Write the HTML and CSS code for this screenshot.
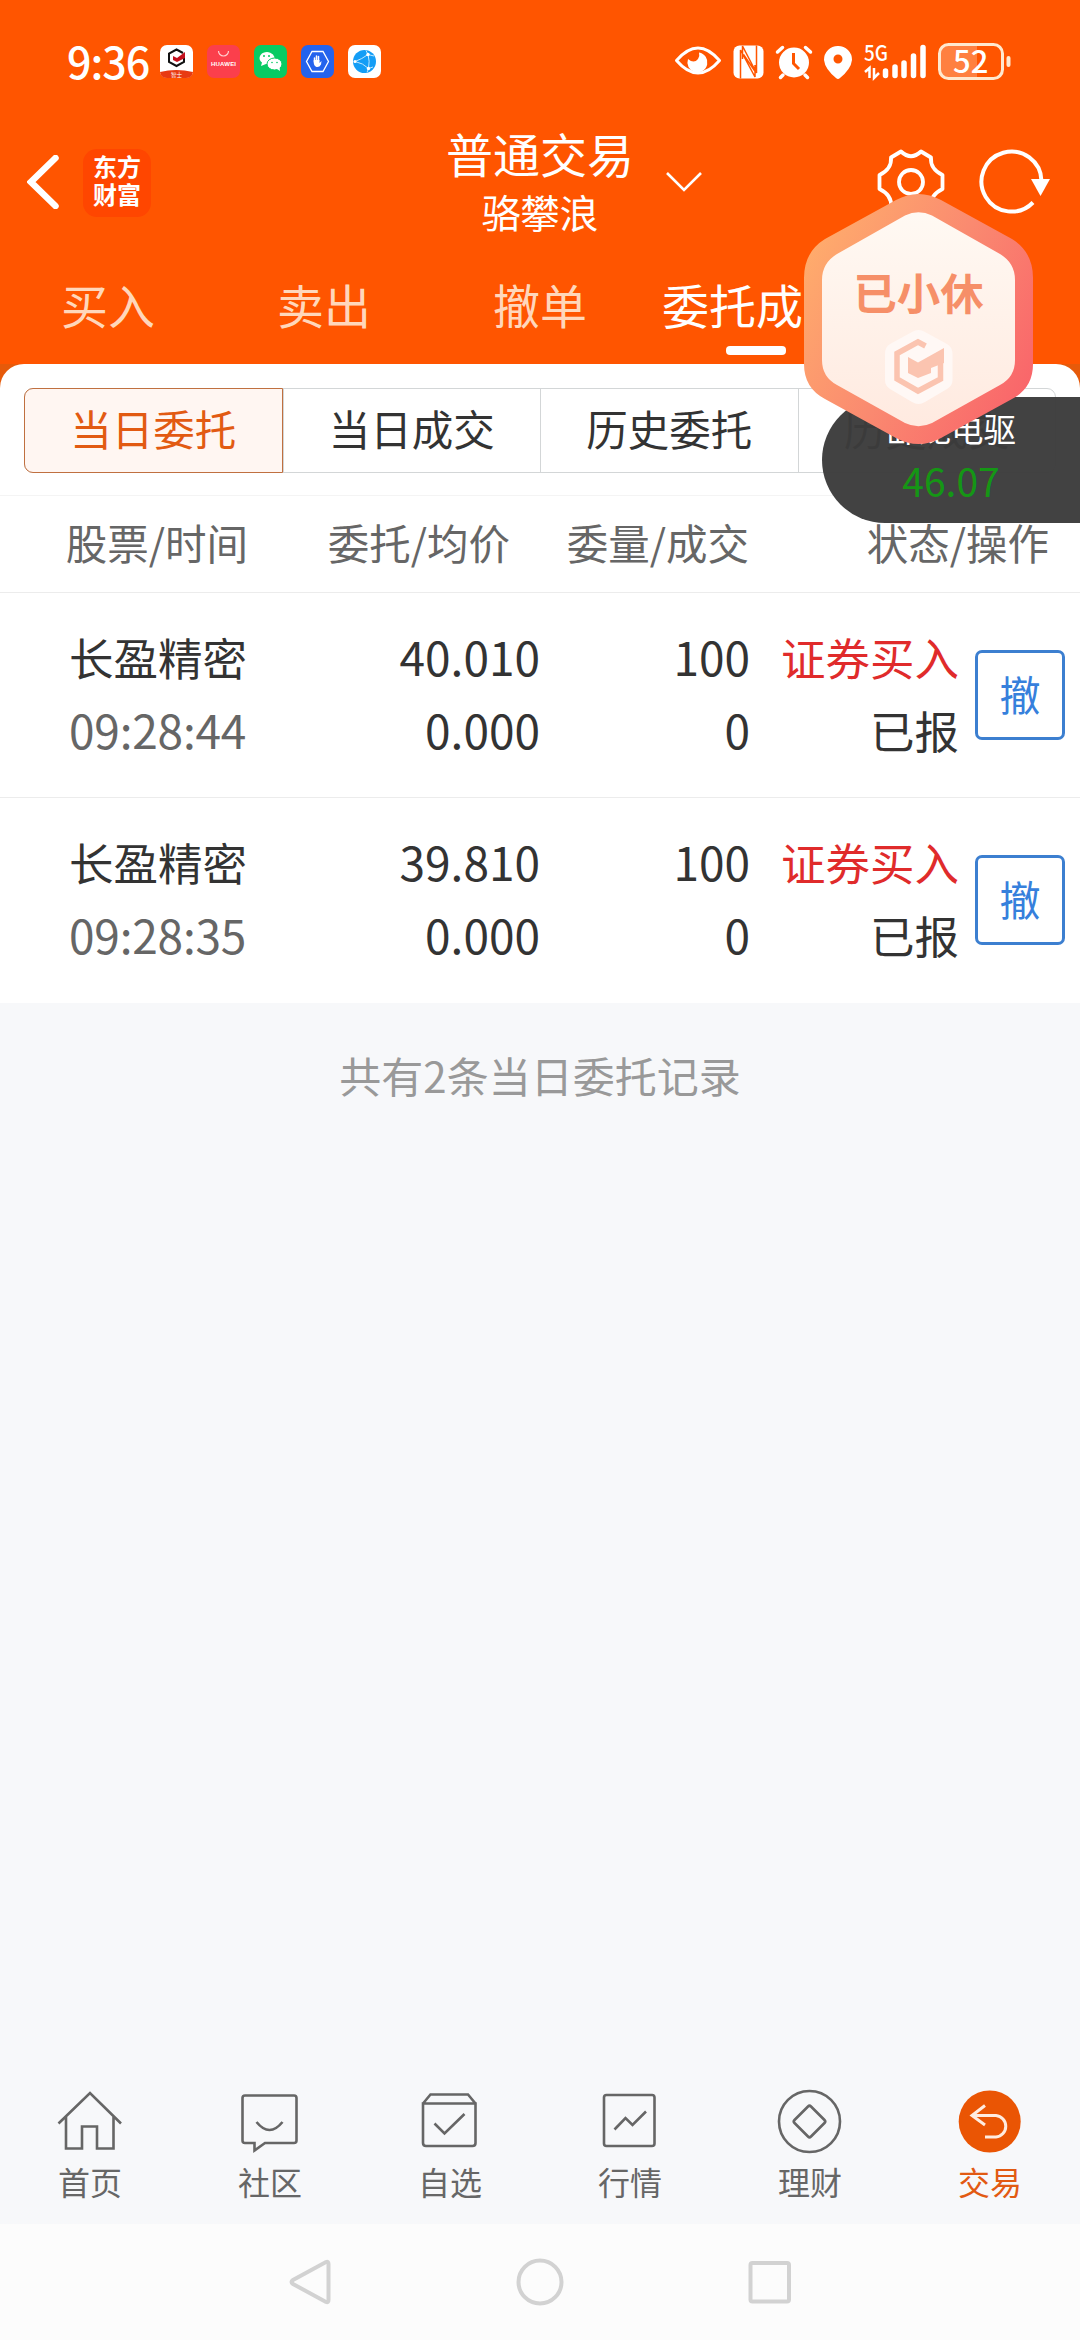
FILE: index.html
```html
<!DOCTYPE html>
<html lang="zh-CN">
<head>
<meta charset="utf-8">
<title>普通交易</title>
<link rel="stylesheet" href="styles.css">
</head>
<body>
<div class="screen">
  <header class="head">
    <div class="status">
      <span class="clock">9:36</span>
      <div class="apps">
        <svg class="app" viewBox="0 0 33 33"><rect width="33" height="33" rx="7" fill="#fff"/><path d="M0 27Q16 23 33 27V27Q32 33 26 33H7Q1 33 0 27Z" fill="#e83a12"/><path d="M23 8L16.500 4.500L9 8.500V17L16.500 21L24 17V13" fill="none" stroke="#111" stroke-width="2"/><path d="M13 11L17 13L25 7V13L17 17L13 15Z" fill="#c4101c"/><text class="tiny" x="11" y="31.500">智士</text></svg>
        <svg class="app" viewBox="0 0 33 33"><rect width="33" height="33" rx="7" fill="#fb3f4c"/><path d="M11.500 6A5 5 0 0 0 21.500 6" fill="none" stroke="#ffd0d0" stroke-width="1.200"/><text class="brand" x="4" y="20.800" textLength="25">HUAWEI</text></svg>
        <svg class="app" viewBox="0 0 33 33"><rect width="33" height="33" rx="7" fill="#07cb63"/><path d="M7 21L8 17.500A7.500 6 0 1 1 12 19Z" fill="#fff"/><ellipse cx="20.500" cy="19" rx="7.500" ry="6" fill="#fff" stroke="#07cb63"/><path d="M23 24L26 26L25.500 22Z" fill="#fff"/><g fill="#07cb63"><circle cx="10" cy="11" r="1"/><circle cx="15" cy="11" r="1"/><circle cx="18" cy="17.500" r=".8"/><circle cx="23" cy="17.500" r=".8"/></g></svg>
        <svg class="app" viewBox="0 0 33 33"><rect width="33" height="33" rx="7" fill="#2463ed"/><path d="M11 6.500H22L27.500 16.500L22 26.500H11L5.500 16.500Z" fill="none" stroke="#fff" stroke-width="1.300"/><path d="M13.500 17V13M15.500 16V11M17.500 16V11.500" stroke="#fff" stroke-width="1.500" stroke-linecap="round"/><path d="M12.700 15H18.500V18L20.500 16L20 19.500Q18.500 22.500 15.500 22Q12.700 21 12.700 17Z" fill="#fff"/></svg>
        <svg class="app" viewBox="0 0 33 33"><rect width="33" height="33" rx="7" fill="#fff"/><circle cx="16.500" cy="16.500" r="11.500" fill="#139df6"/><path d="M20 9.500Q14 14 7 16.500Q15 18 20.500 23.500Q22 16 20 9.500L26 11M20.500 23.500L25 22M20 9.500L18 5.500M20.500 23.500L19 27.500" fill="none" stroke="#bfe7ff" stroke-width="1"/><circle cx="20" cy="9.500" r="1.700" fill="#fff"/><circle cx="7" cy="16.500" r="1.500" fill="#fff"/><circle cx="20.500" cy="23.500" r="1.700" fill="#fff"/></svg>
      </div>
      <svg class="sys" viewBox="0 0 340 40" fill="#fff">
        <path d="M4.500 19.500Q26 -5.500 47.500 19.500Q26 44.500 4.500 19.500Z" fill="none" stroke="#fff" stroke-width="3" stroke-linejoin="round"/>
        <path d="M27 11.500A10 10 0 1 1 16 18Q22 23 26 18Q28 15 27 11.500Z"/>
        <rect x="61.500" y="4.500" width="30" height="33" rx="6"/>
        <path d="M68.500 37.500V9L83 36V24M84.500 4.500V32L70.500 5V18M71.500 13.500L83.500 31" fill="none" stroke="#ff5500" stroke-width="1.500"/>
        <circle cx="122" cy="21.500" r="15"/><path d="M105.500 11L110.500 6.500M138.500 11L133.500 6.500M111 34L108.500 36.500M133 34L135.500 36.500" stroke="#fff" stroke-width="3.500" stroke-linecap="round"/><path d="M121.500 12V22.500L127 28" fill="none" stroke="#ff5500" stroke-width="3"/>
        <path fill-rule="evenodd" d="M166 5A13.800 13.800 0 0 1 180 19Q179 28 168 37Q166 39 164 37Q153 28 152 19A13.800 13.800 0 0 1 166 5ZM166 13.500A4.500 4.500 0 1 0 166 22.500A4.500 4.500 0 1 0 166 13.500Z"/>
        <text class="net" x="192" y="20" textLength="24" lengthAdjust="spacingAndGlyphs">5G</text>
        <path d="M193 31L197.500 27V37M202 27V37L207 32" fill="none" stroke="#fff" stroke-width="2.500"/>
        <path d="M213.500 30V34.500M223 26V34.500M232 22V34.500M241.500 15V34.500M251 6.500V34.500" stroke="#fff" stroke-width="5.500" stroke-linecap="round"/>
        <path d="M277 4H305V38H277Q268 38 268 29V13Q268 4 277 4Z" fill="#ff8040"/>
        <rect x="267.500" y="3.500" width="63" height="34" rx="9" fill="none" stroke="#ffe9cf" stroke-width="3"/>
        <rect x="334.500" y="15" width="4" height="11" rx="2" fill="#ffe9cf"/>
        <text class="batt" x="281" y="32">52</text>
      </svg>
    </div>
    <div class="titlebar">
      <svg class="back" viewBox="0 0 32 54"><path d="M28.500 3L4 27L28.500 51" fill="none" stroke="#fff" stroke-width="6.500" stroke-linecap="round"/></svg>
      <div class="logo">东方<br>财富</div>
      <div class="account"><div class="kind">普通交易</div><div class="owner">骆攀浪</div></div>
      <svg class="drop" viewBox="0 0 38 22"><path d="M2 2L19 19L36 2" fill="none" stroke="#fff" stroke-width="2.600"/></svg>
      <svg class="gear" viewBox="0 0 68 68"><path d="M24 3.500Q34 13 44 3.500L54 9.500Q53 21 65.500 27V41Q53 47 54 58.500L44 64.500Q34 55 24 64.500L14 58.500Q15 47 2.500 41V27Q15 21 14 9.500Z" fill="none" stroke="#fff" stroke-width="3.800" stroke-linejoin="round"/><circle cx="34" cy="34" r="12" fill="none" stroke="#fff" stroke-width="3.800"/></svg>
      <svg class="reload" viewBox="0 0 72 66"><path d="M62.500 32A30 30 0 1 0 54 53.500" fill="none" stroke="#fff" stroke-width="4"/><path d="M52 30H71L61.500 47Z" fill="#fff"/></svg>
    </div>
    <nav class="tabs"><span>买入</span><span>卖出</span><span>撤单</span><span class="on">委托成交</span><span></span></nav>
  </header>

  <main class="sheet">
    <div class="segwrap"><div class="segs"><span class="seg on">当日委托</span><span class="seg">当日成交</span><span class="seg">历史委托</span><span class="seg">历史成交</span></div></div>
    <div class="cols"><span>股票/时间</span><span>委托/均价</span><span>委量/成交</span><span>状态/操作</span></div>
    <div class="order">
      <div class="cell name"><b>长盈精密</b><i class="time">09:28:44</i></div>
      <div class="cell num"><b>40.010</b><i>0.000</i></div>
      <div class="cell num"><b>100</b><i>0</i></div>
      <div class="cell state"><b class="buy">证券买入</b><i>已报</i></div>
      <button class="cancel">撤</button>
    </div>
    <div class="order">
      <div class="cell name"><b>长盈精密</b><i class="time">09:28:35</i></div>
      <div class="cell num"><b>39.810</b><i>0.000</i></div>
      <div class="cell num"><b>100</b><i>0</i></div>
      <div class="cell state"><b class="buy">证券买入</b><i>已报</i></div>
      <button class="cancel">撤</button>
    </div>
  </main>
  <p class="summary">共有2条当日委托记录</p>

  <footer class="menu">
    <div class="item"><svg viewBox="0 0 72 72"><path d="M4.500 38.500L36 8L67 38.500M12 32V63.500H28V41.500H43V63.500H59.500V32"/></svg>首页</div>
    <div class="item"><svg viewBox="0 0 72 72"><path d="M11 10.500H60Q62.500 10.500 62.500 13V55.500Q62.500 58 60 58H31L20.500 65.500V58H11Q8.500 58 8.500 55.500V13Q8.500 10.500 11 10.500ZM22.500 37Q35.500 53 48.500 37"/></svg>社区</div>
    <div class="item"><svg viewBox="0 0 72 72"><path d="M9 18.500H61.500V58Q61.500 61 58.500 61H12Q9 61 9 58ZM9 18.500L16.500 9.500H54L61.500 18.500M20.500 38.500L30.500 48.500L50.500 29"/></svg>自选</div>
    <div class="item"><svg viewBox="0 0 72 72"><rect x="10" y="10" width="50.500" height="51" rx="2.500"/><path d="M20.500 44.500L31.500 33L38.500 40L52 26.500"/></svg>行情</div>
    <div class="item"><svg viewBox="0 0 72 72"><circle cx="35.500" cy="36.500" r="30.500"/><path d="M34 21.500Q35.500 20 37 21.500L50.500 35Q52 36.500 50.500 38L37 51.500Q35.500 53 34 51.500L20.500 38Q19 36.500 20.500 35Z"/></svg>理财</div>
    <div class="item on"><svg viewBox="0 0 72 72"><circle class="disc" cx="35.700" cy="36.500" r="31"/><path class="turn" d="M31 20.500L18 30.500L31 40M18 30.500H42A10.800 10.800 0 0 1 42 52H31"/></svg>交易</div>
  </footer>
  <div class="keys">
    <svg viewBox="0 0 50 50"><path d="M41 5Q43.500 4 43.500 7V43Q43.500 46 41 45L8 27Q5 25 8 23Z"/></svg>
    <svg viewBox="0 0 50 50"><circle cx="25" cy="25" r="21.500"/></svg>
    <svg viewBox="0 0 50 50"><rect x="5.500" y="6" width="38.500" height="38.500" rx="2"/></svg>
  </div>

  <div class="ticker"><span>卧龙电驱</span><strong>46.07</strong></div>
  <svg class="rest" viewBox="0 0 229 250">
    <defs>
      <linearGradient id="rim" x1="0" y1=".2" x2="1" y2=".8"><stop offset="0" stop-color="#ffad6c"/><stop offset=".5" stop-color="#fa8a70"/><stop offset="1" stop-color="#f9646a"/></linearGradient>
      <linearGradient id="face" x1="0" y1="0" x2="0" y2="1"><stop offset="0" stop-color="#fff9f3"/><stop offset="1" stop-color="#ffeae0"/></linearGradient>
    </defs>
    <path fill="url(#rim)" d="M92 6Q114.500 -6 137 6L208 45Q229 58 229 84V170Q229 194 208 205L137 244Q114.500 256 92 244L21 205Q0 194 0 170V84Q0 58 21 45Z"/>
    <path fill="url(#face)" d="M101 21.500Q114.500 15 128 21.500L196 60Q211 69 211 86V166Q211 183 196 191L128 229Q114.500 235.500 101 229L33 191Q18 183 18 166V86Q18 69 33 60Z"/>
    <path fill="#fff8f5" d="M108 138Q114.500 134 121 138L143 150Q148.500 153 148.500 160V186Q148.500 192 143 195L121 208Q114.500 212 108 208L86 195Q81 192 81 186V160Q81 153 86 150Z"/>
    <path fill="none" stroke="#fbc4b0" stroke-width="5.500" d="M121.500 152L114 148L93 159.500V185L114 197L136.500 185V168"/>
    <path fill="#fbc4b0" d="M104 163L114 168.500L140 154V169L127 174V179L114 184L104 179Z"/>
    <text class="resttext" x="114.500" y="116">已小休</text>
  </svg>
</div>
</body>
</html>
```
FILE: styles.css
```css
* { box-sizing: border-box; margin: 0; }
body { width: 1080px; height: 2340px; overflow: hidden; font-family: "Noto Sans CJK SC", sans-serif; color: #333; }
b, i { font-weight: 400; font-style: normal; }
svg { display: block; flex: none; }
.screen { position: relative; display: flex; flex-direction: column; height: 2340px; background: #f7f8fa; }
.head { height: 364px; background: #ff5500; color: #fff; flex: none; }
.status { display: flex; height: 124px; padding: 40px 67px 0; align-items: flex-start; }
.clock { width: 93px; margin-top: -4px; font: 500 43px/48px "Noto Sans CJK SC", sans-serif; letter-spacing: -1px; }
.apps { display: flex; gap: 14px; margin-top: 5px; }
.app { width: 33px; height: 33px; }
.tiny { font-size: 5.500px; fill: #fff; }
.brand { font: 700 6px "Liberation Sans", sans-serif; fill: #fff; }
.sys { width: 340px; height: 40px; margin-left: 291px; margin-top: 1px; overflow: visible; }
.net { font: 500 22px "Noto Sans CJK SC", sans-serif; }
.batt { font: 500 31px "Noto Sans CJK SC", sans-serif; }
.titlebar { display: flex; height: 124px; padding-left: 27px; align-items: flex-start; }
.back { width: 32px; height: 54px; margin-top: 31px; }
.logo { width: 68px; height: 68px; margin: 25px 0 0 24px; border-radius: 14px; background: #ff4600; font-size: 24px; font-weight: 700; line-height: 28px; text-align: center; padding-top: 3px; }
.account { width: 230px; margin-left: 274px; text-align: center; }
.kind { font-size: 47px; line-height: 60px; margin-top: -1px; }
.owner { font-size: 39px; line-height: 57px; }
.drop { width: 38px; height: 22px; margin: 47px 0 0 10px; }
.gear { width: 68px; height: 68px; margin: 24px 0 0 174px; }
.reload { width: 72px; height: 66px; margin: 25px 0 0 34px; }
.tabs { display: grid; grid-template-columns: repeat(5, 216px); height: 116px; font-size: 47px; line-height: 64px; padding-top: 24px; }
.tabs span { text-align: center; color: #ffd7bb; }
.tabs .on { color: #fff; }
.tabs .on::after { content: ""; display: block; width: 60px; height: 9px; margin: 10px auto 0; border-radius: 4px; background: #fff; }
.sheet { flex: none; background: linear-gradient(#e65a0a 0 24px, #fff 24px); }
.segwrap { height: 132px; padding: 24px; border-radius: 24px 24px 0 0; background: #fff; border-bottom: 1px solid #f4f4f4; }
.segs { display: grid; grid-template-columns: repeat(4, 1fr); height: 85px; border: 1px solid #d3d6d7; border-radius: 9px; }
.seg { font-size: 41.500px; line-height: 79px; text-align: center; border-left: 1px solid #d3d6d7; }
.seg.on { margin: -1px 0 -1px -1px; border: 1px solid #c07040; border-radius: 9px 0 0 9px; background: #fff6f2; color: #e25a12; line-height: 79px; }
.cols { display: grid; grid-template-columns: 248px 262px 239px 300px; height: 97px; font-size: 41.500px; line-height: 92px; color: #666; text-align: right; border-bottom: 1px solid #ececec; }
.order { display: grid; grid-template-columns: 247px 293px 210px 209px 90px; height: 205px; padding-top: 27px; border-bottom: 1px solid #ececec; }
.order:last-child { border-bottom: 0; }
.cell { display: flex; flex-direction: column; text-align: right; font-size: 44.500px; line-height: 73px; }
.name { text-align: left; padding-left: 69px; white-space: nowrap; }
.num, .time { font-size: 46px; }
.time { color: #666; letter-spacing: -.2px; }
.buy { color: #e02b2b; }
.cancel { width: 90px; height: 90px; margin: 30px 0 0 16px; padding: 0; border: 3px solid #3c7fd0; border-radius: 7px; background: #fff; color: #3680dc; font: 400 41px/80px "Noto Sans CJK SC", sans-serif; padding-bottom: 4px; }
.summary { flex: 1; padding-top: 42px; text-align: center; font-size: 42px; line-height: 60px; color: #999; }
.menu { display: grid; grid-template-columns: repeat(6, 180px); height: 142px; flex: none; }
.item { display: flex; flex-direction: column; align-items: center; font-size: 32px; line-height: 46px; color: #666; padding-top: 3px; }
.item svg { width: 72px; height: 72px; margin-bottom: 1px; fill: none; stroke: #666; stroke-width: 2.600; }
.item.on { color: #e25a12; }
.item .disc { fill: #ea5504; stroke: none; }
.item .turn { stroke: #ffece0; stroke-width: 3; }
.keys { display: flex; justify-content: center; gap: 180px; height: 116px; padding-top: 33px; flex: none; background: #fcfcfc; }
.keys svg { width: 50px; height: 50px; fill: none; stroke: #d2d2d2; stroke-width: 4; }
.ticker { position: absolute; left: 822px; top: 397px; width: 258px; height: 126px; border-radius: 63px 0 0 63px; background: rgba(60, 60, 60, .97); display: flex; flex-direction: column; align-items: center; color: #fff; }
.ticker span { font-size: 32.500px; line-height: 44px; margin-top: 9px; }
.ticker strong { font-weight: 400; font-size: 39px; line-height: 60px; color: #159615; }
.rest { position: absolute; left: 804px; top: 194px; width: 229px; height: 250px; }
.resttext { font: 700 43.500px "Noto Sans CJK SC", sans-serif; fill: #f68f68; text-anchor: middle; }
```
